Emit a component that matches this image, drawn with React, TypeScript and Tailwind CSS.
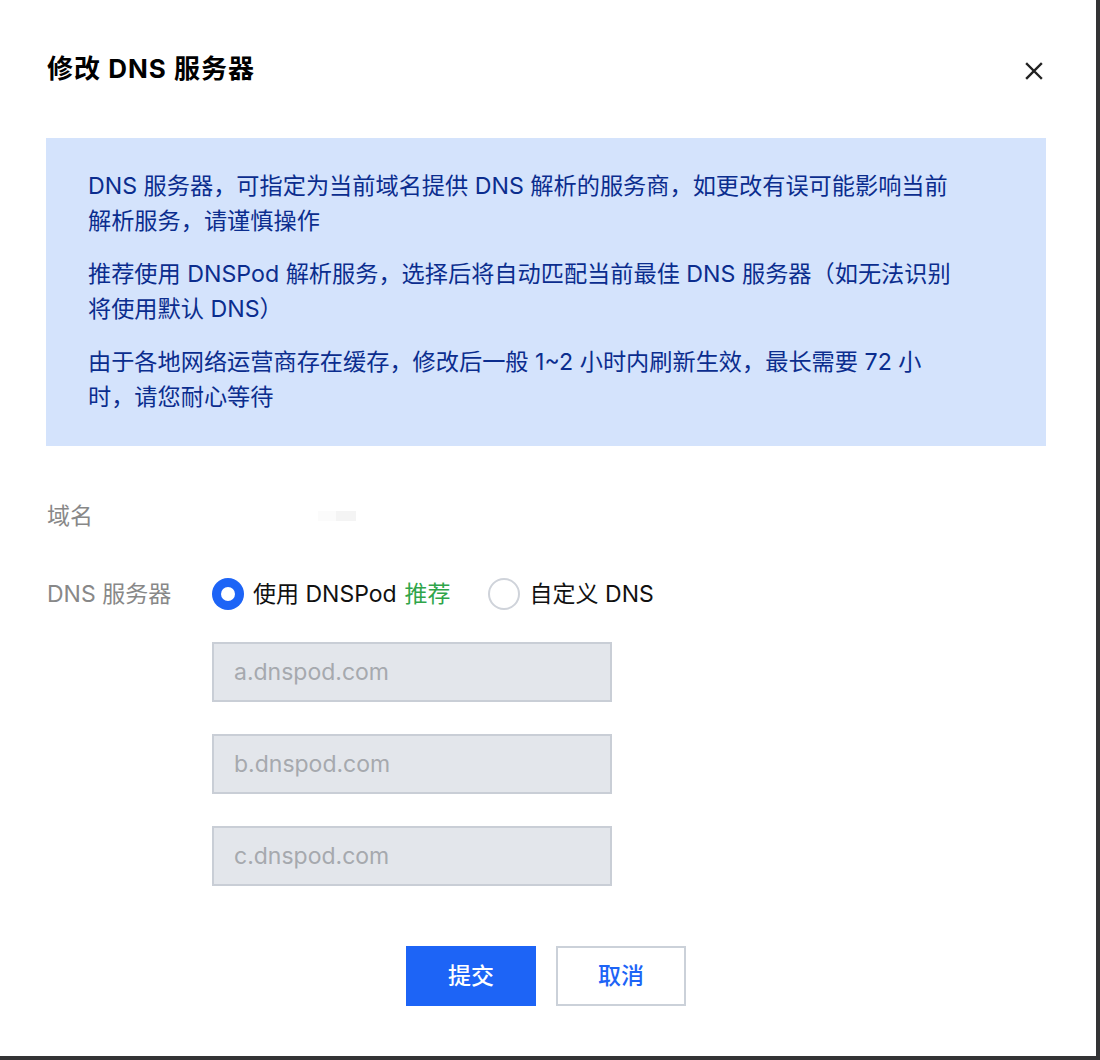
import React from 'react';

const font = "font-['Inter','Noto_Sans_CJK_SC',sans-serif]";

const notes: string[][] = [
    ['DNS 服务器，可指定为当前域名提供 DNS 解析的服务商，如更改有误可能影响当前', '解析服务，请谨慎操作'],
    ['推荐使用 DNSPod 解析服务，选择后将自动匹配当前最佳 DNS 服务器（如无法识别', '将使用默认 DNS）'],
    ['由于各地网络运营商存在缓存，修改后一般 1~2 小时内刷新生效，最长需要 72 小', '时，请您耐心等待'],
];

const servers = ['a.dnspod.com', 'b.dnspod.com', 'c.dnspod.com'];

const App: React.FC = () => {
    return (
        <div className={`w-[1100px] h-[1060px] bg-[#333335] ${font}`}>
            <div className="w-[1096px] h-[1056px] bg-white pt-[50px] pl-[46px] pr-[50px] flex flex-col">
                {/* header */}
                <div className="flex items-center justify-between h-[38px] pl-px">
                    <h1 className="text-[26px] tracking-[1px] font-bold text-black leading-[38px]">修改 DNS 服务器</h1>
                    <button className="w-[24px] h-[24px] flex items-center justify-center text-[#222] mt-[4px]">
                        <svg width="18" height="18" viewBox="0 0 18 18" fill="none" stroke="currentColor" strokeWidth="2.4" strokeLinecap="square">
                            <path d="M2 2L16 16M16 2L2 16" />
                        </svg>
                    </button>
                </div>

                {/* notice */}
                <div className="mt-[50px] w-[1000px] bg-[#d4e3fc] pt-[31px] pb-[31px] pl-[42px] pr-[40px] text-[#0b2d8e] text-[23.2px] leading-[35px] flex flex-col gap-[18px]">
                    {notes.map((lines, i) => (
                        <p key={i} className="whitespace-nowrap">
                            {lines[0]}
                            <br />
                            {lines[1]}
                        </p>
                    ))}
                </div>

                {/* form */}
                <div className="mt-[50px] flex flex-col text-[23px]">
                    <div className="flex items-center h-[40px]">
                        <span className="w-[166px] pl-px text-[#888]">域名</span>
                        <span className="ml-[106px] flex">
                            <span className="w-[18px] h-[10px] bg-[#fbfbfb]" />
                            <span className="w-[20px] h-[10px] bg-[#f4f4f4]" />
                        </span>
                    </div>

                    <div className="flex items-center h-[40px] mt-[38px]">
                        <span className="w-[166px] pl-px text-[#888]">DNS 服务器</span>
                        <label className="flex items-center">
                            <span className="w-[32px] h-[32px] rounded-full bg-[#1d64f6] flex items-center justify-center">
                                <span className="w-[14px] h-[14px] rounded-full bg-white" />
                            </span>
                            <span className="ml-[9px] text-[#111]">使用 DNSPod</span>
                            <span className="ml-[8px] text-[#2fa54a]">推荐</span>
                        </label>
                        <label className="flex items-center ml-[37px]">
                            <span className="w-[32px] h-[32px] rounded-full border-2 border-[#cfd3da] bg-white" />
                            <span className="ml-[10px] text-[#111]">自定义 DNS</span>
                        </label>
                    </div>

                    <div className="ml-[166px] mt-[28px] flex flex-col gap-[32px]">
                        {servers.map((s) => (
                            <div
                                key={s}
                                className="w-[400px] h-[60px] bg-[#e3e6eb] border-2 border-[#c9ced6] flex items-center pl-[20px] text-[#a6a9ae]"
                            >
                                {s}
                            </div>
                        ))}
                    </div>
                </div>

                {/* actions */}
                <div className="mt-[60px] flex justify-center gap-[20px]">
                    <button className="w-[130px] h-[60px] bg-[#1d64f6] text-white text-[23px] font-medium">提交</button>
                    <button className="w-[130px] h-[60px] bg-white border-2 border-[#cbd1d9] text-[#1d64f6] text-[23px] font-medium">取消</button>
                </div>
            </div>
        </div>
    );
};

export default App;
